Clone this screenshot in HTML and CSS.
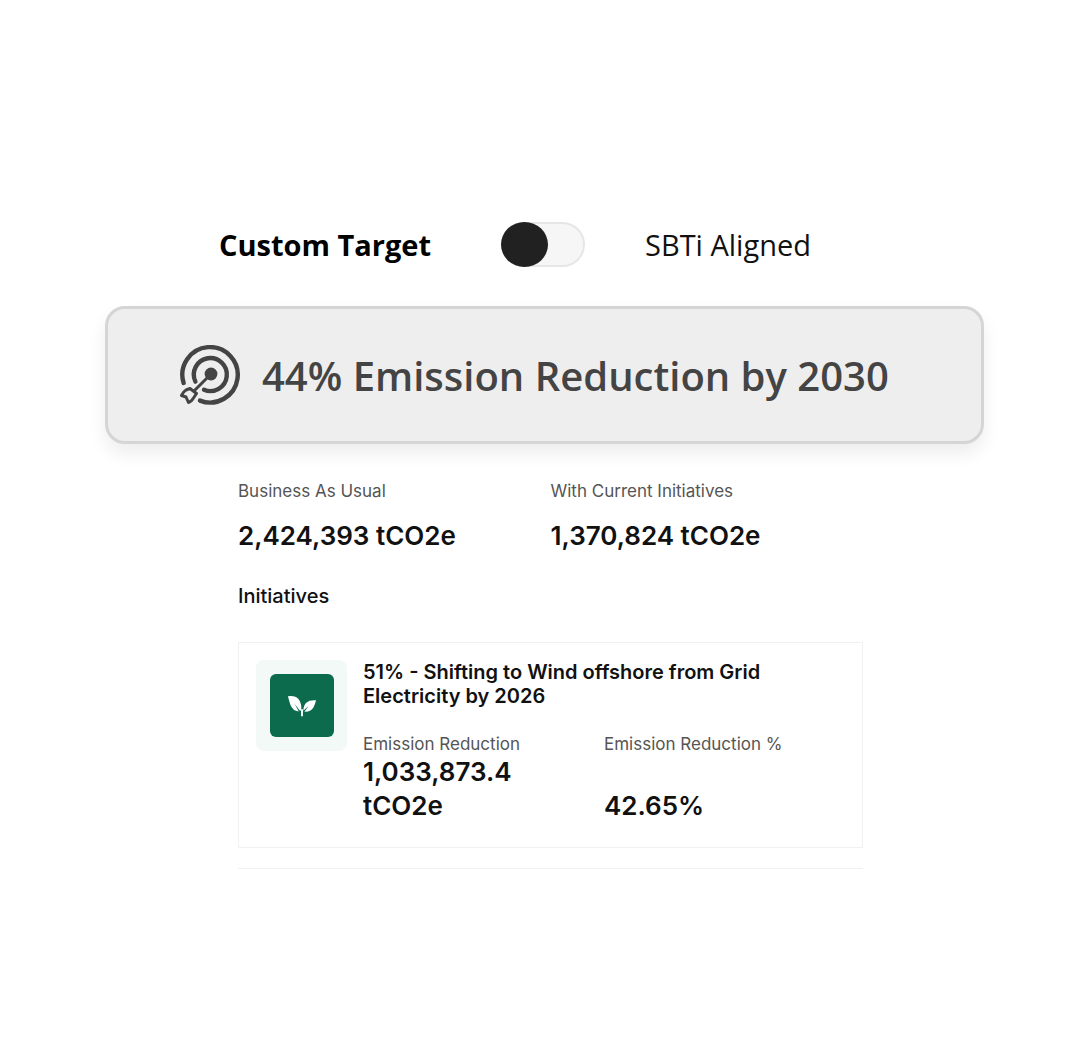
FILE: index.html
```html
<!doctype html>
<html lang="en">
<head>
    <meta charset="UTF-8">
    <title>Custom Target</title>
    <link rel="stylesheet" href="styles.css">
</head>
<body>

    <div id="frame">

        <div class="switch-row">
            <span class="opt on">Custom Target</span>
            <span class="toggle"><span class="knob"></span></span>
            <span class="opt">SBTi Aligned</span>
        </div>

        <div class="banner">
            <svg class="target" viewBox="0 0 60 60" fill="none" stroke="#444" stroke-width="4.4" stroke-linecap="round" stroke-linejoin="round">
                <path d="M3.6 38 A27.7 27.7 0 1 1 20 55.6"/>
                <path d="M15.4 36.6 A16.5 16.5 0 1 1 24 44.8"/>
                <circle cx="31" cy="29" r="6.4" fill="#444" stroke="none"/>
                <path d="M29 31 L14 46" stroke-width="3"/>
                <path d="M10 43.5 L16.5 48.5 L13.5 53 Q11 57 8.5 57.5 L6 52 L1.5 50.5 Q3.5 46.5 6 45 Z" stroke-width="3"/>
            </svg>
            <span class="banner-text">44% Emission Reduction by 2030</span>
        </div>

        <div class="panel">
            <div class="stats">
                <div class="stat">
                    <label>Business As Usual</label>
                    <div class="value">2,424,393 tCO2e</div>
                </div>
                <div class="stat">
                    <label>With Current Initiatives</label>
                    <div class="value">1,370,824 tCO2e</div>
                </div>
            </div>

            <h2>Initiatives</h2>

            <div class="card">
                <div class="tile">
                    <div class="tile-inner">
                        <svg class="leaf" viewBox="0 0 32 24" fill="#fff">
                            <path d="M1 2 Q10 1 13 6 Q16 11 15 17 Q14 18 13.4 17 L8 10 L12.6 18.4 Q6 18 3.5 11 Q2 6 1 2 Z"/>
                            <path d="M31 6.5 Q24 6 20.5 9 Q17.5 12 17.4 17.5 L23 12.5 L18.6 18.6 Q25 19 28 14.5 Q30 11 31 6.5 Z"/>
                            <path d="M15 16 H17 V23.5 H15 Z"/>
                        </svg>
                    </div>
                </div>
                <div class="card-body">
                    <div class="card-title">51% - Shifting to Wind offshore from Grid Electricity by 2026</div>
                    <div class="card-stats">
                        <div class="card-stat first">
                            <label>Emission Reduction</label>
                            <div class="value">1,033,873.4 tCO2e</div>
                        </div>
                        <div class="card-stat">
                            <label>Emission Reduction %</label>
                            <div class="value">42.65%</div>
                        </div>
                    </div>
                </div>
            </div>

            <div class="rule"></div>
        </div>

    </div>

</body>
</html>
```

FILE: styles.css
```css
body {
    margin: 0;
    background-color: #fff;
    font-family: Inter, sans-serif;
    color: #111;
}

#frame {
    padding: 222px 105px 168px;
}

/* toggle row */

.switch-row {
    display: flex;
    align-items: center;
    height: 45px;
    padding-left: 114px;
}

.opt {
    font-family: "Open Sans", sans-serif;
    font-size: 29px;
    color: #111;
    width: 180px;
}

.opt.on {
    font-weight: 700;
    color: #000;
    width: 229px;
    white-space: nowrap;
}

.toggle {
    display: block;
    box-sizing: border-box;
    width: 84px;
    height: 45px;
    margin: 0 60px 0 53px;
    background-color: #f6f6f6;
    border: 2px solid #e6e6e6;
    border-radius: 23px;
}

.knob {
    display: block;
    width: 47px;
    height: 45px;
    margin: -2px 0 0 -2px;
    background-color: #212121;
    border-radius: 50%;
}

/* banner */

.banner {
    display: flex;
    align-items: center;
    box-sizing: border-box;
    height: 138px;
    margin-top: 39px;
    padding-left: 72px;
    background-color: #eee;
    border: 3px solid #d5d5d5;
    border-radius: 20px;
    box-shadow: 0 10px 18px rgba(0, 0, 0, 0.07);
}

.target {
    width: 60px;
    height: 60px;
    flex: none;
}

.banner-text {
    margin-left: 22px;
    font-family: "Open Sans", sans-serif;
    font-size: 40px;
    font-weight: 600;
    color: #444;
    white-space: nowrap;
}

/* lower part */

.panel {
    width: 625px;
    margin: 36px 0 0 133px;
}

.stats {
    display: flex;
}

.stat {
    width: 332px;
}

label {
    display: block;
    font-size: 17px;
    line-height: 22px;
    color: #555;
}

.value {
    font-size: 26px;
    font-weight: 600;
    line-height: 34px;
    color: #111;
}

.stat .value {
    margin-top: 17px;
}

h2 {
    margin: 30px 0 0;
    font-size: 20px;
    font-weight: 500;
    line-height: 26px;
}

.card {
    display: flex;
    box-sizing: border-box;
    height: 206px;
    margin-top: 33px;
    padding: 17px 17px 0;
    border: 1px solid #f1f1f1;
}

.tile {
    display: flex;
    align-items: center;
    justify-content: center;
    width: 91px;
    height: 91px;
    flex: none;
    background-color: #f2f9f6;
    border-radius: 8px;
}

.tile-inner {
    display: flex;
    align-items: center;
    justify-content: center;
    width: 64px;
    height: 63px;
    background-color: #0b6b4c;
    border-radius: 6px;
}

.leaf {
    width: 30px;
    height: 23px;
}

.card-body {
    margin-left: 16px;
}

.card-title {
    font-size: 20px;
    font-weight: 600;
    line-height: 24px;
}

.card-stats {
    display: flex;
    margin-top: 25px;
}

.card-stat {
    display: flex;
    flex-direction: column;
    justify-content: space-between;
}

.card-stat.first {
    width: 241px;
}

.card-stat.first .value {
    width: 190px;
}

.rule {
    height: 1px;
    margin-top: 20px;
    background-color: #f1f1f1;
}
```
